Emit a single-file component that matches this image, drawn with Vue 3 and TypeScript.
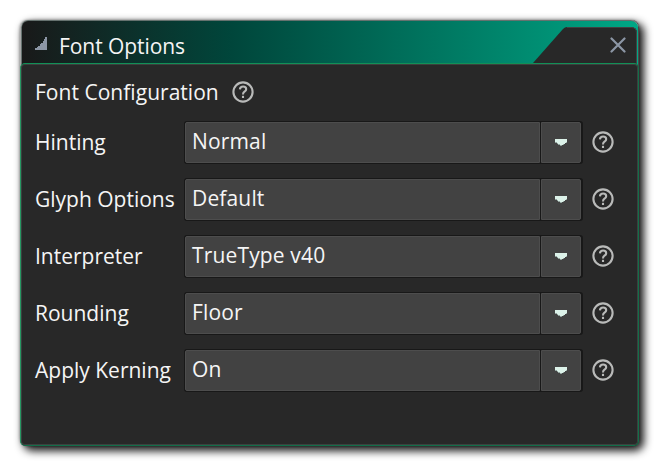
<script setup lang="ts">
import { ref } from 'vue'

interface Option {
  label: string
  value: string
}

const options = ref<Option[]>([
  { label: 'Hinting', value: 'Normal' },
  { label: 'Glyph Options', value: 'Default' },
  { label: 'Interpreter', value: 'TrueType v40' },
  { label: 'Rounding', value: 'Floor' },
  { label: 'Apply Kerning', value: 'On' },
])
</script>

<template>
  <main class="stage">
    <section class="window">
      <header class="titlebar">
        <svg class="collapse" width="12" height="13" viewBox="0 0 12 13" shape-rendering="crispEdges">
          <path d="M10 0h2v13H0v-2h2v-1h1V9h2V7h1V6h2V4h1V2h1z" fill="#8c96a5" />
        </svg>
        <h1 class="title">Font Options</h1>
        <div class="tab">
          <svg class="tab-shape" width="105" height="41" viewBox="0 0 105 41">
            <path d="M0 36L30 2Q32 0 34 0H98Q104 0 104 6V41H0z" fill="#282828" />
            <path d="M34 .5H98Q103.500 .5 103.500 6V41" fill="none" stroke="#414141" />
          </svg>
          <svg class="close" width="16" height="16" viewBox="0 0 16 16">
            <path d="M1.500 1.500l13 13M14.500 1.500l-13 13" stroke="#8c96a5" stroke-width="2.200" stroke-linecap="round" />
          </svg>
        </div>
      </header>
      <div class="body">
        <div class="heading">
          <h2 class="text">Font Configuration</h2>
          <svg class="help" width="22" height="22" viewBox="0 0 22 22">
            <circle cx="11" cy="11" r="9.600" />
            <path d="M7.900 8.300Q8.200 5.500 11.100 5.500Q14.200 5.500 14.200 8.200Q14.200 9.600 12.500 10.700Q11 11.700 11 13.400" />
            <path d="M11 14.800v2.200" />
          </svg>
        </div>
        <div v-for="option in options" :key="option.label" class="row">
          <span class="text label">{{ option.label }}</span>
          <div class="select">
            <span class="value">{{ option.value }}</span>
            <span class="drop">
              <svg width="12" height="7" viewBox="0 0 12 7" shape-rendering="crispEdges">
                <path d="M0 0h12v4h-2v1h-1v1h-2v1H5V6H3V5H2V4H0z" fill="#93a49f" />
                <path d="M0 0h12v3h-1v1h-1v1H8v1H5V5H3V4H2V3H0z" fill="#dcf2e9" />
              </svg>
            </span>
          </div>
          <svg class="help" width="22" height="22" viewBox="0 0 22 22">
            <circle cx="11" cy="11" r="9.600" />
            <path d="M7.900 8.300Q8.200 5.500 11.100 5.500Q14.200 5.500 14.200 8.200Q14.200 9.600 12.500 10.700Q11 11.700 11 13.400" />
            <path d="M11 14.800v2.200" />
          </svg>
        </div>
      </div>
    </section>
  </main>
</template>

<style>
body {
  margin: 0;
  background: #fff;
}
</style>

<style scoped>
.stage {
  box-sizing: border-box;
  width: 659px;
  height: 466px;
  padding: 20px;
  overflow: hidden;
  background: #fff;
  color: #f5f5f5;
  font-family: 'Open Sans', 'Noto Sans', sans-serif;
  font-size: 21px;
  line-height: 28px;
}

.window {
  width: 619px;
  height: 426px;
  border-radius: 8px;
  box-shadow: 4px 4px 9px 1px rgba(0, 0, 0, 0.9), 0 0 3px rgba(0, 0, 0, 0.4);
}

.titlebar {
  box-sizing: border-box;
  display: flex;
  height: 48px;
  margin: 0 1px -5px;
  border-top: 1px solid #66726f;
  border-left: 1px solid #66726f;
  border-radius: 7px 7px 0 0;
  background: linear-gradient(90deg, #191919 0, #00463b 34%, #009074 85%, #00a886 100%);
  box-shadow: -1px 0 #aaa, 1px 0 #484848;
}

.collapse {
  margin: 16px 0 0 13px;
}

.title,
.text {
  margin: 0;
  font-size: 21px;
  font-weight: 400;
  white-space: nowrap;
}

.title {
  margin: 11px auto 0 12px;
  letter-spacing: -0.06px;
}

.tab {
  display: grid;
  width: 105px;
  height: 41px;
  margin-top: 6px;
}

.tab > * {
  grid-area: 1 / 1;
}

.close {
  margin: 10px 0 0 77px;
}

.body {
  position: relative;
  box-sizing: border-box;
  height: 383px;
  padding: 13px 13px 0 14px;
  border: 1px solid #126e49;
  border-top-color: #129057;
  border-left-color: #279763;
  border-radius: 5px;
  background: #282828;
  box-shadow: inset 0 0 0 1px #3c403e;
}

.heading {
  display: flex;
  align-items: center;
  gap: 13px;
  height: 29px;
  margin-bottom: 15px;
}

.heading .text {
  letter-spacing: 0.03px;
}

.row {
  display: flex;
  align-items: center;
  height: 43px;
  margin-bottom: 14px;
}

.label {
  width: 149px;
  padding-bottom: 2px;
}

.select {
  box-sizing: border-box;
  display: flex;
  flex: none;
  width: 399px;
  height: 43px;
  border: 1px solid #181818;
  border-right-width: 2px;
  border-radius: 3px;
  background: #181818;
}

.value {
  box-sizing: border-box;
  width: 355px;
  height: 41px;
  padding: 4px 0 0 6px;
  border: 1px solid #4d4d4d;
  border-radius: 2px 0 0 2px;
  background: #424242;
  font-kerning: none;
  letter-spacing: 0.15px;
}

.drop {
  box-sizing: border-box;
  display: flex;
  align-items: center;
  justify-content: center;
  width: 40px;
  height: 41px;
  margin-left: 1px;
  border: 1px solid #4d4d4d;
  border-radius: 0 2px 2px 0;
  background: #424242;
}

.row .help {
  margin: 0 0 1px 9px;
}

.help {
  flex: none;
  fill: none;
  stroke: #b9bab9;
  stroke-width: 2.1;
}
</style>
